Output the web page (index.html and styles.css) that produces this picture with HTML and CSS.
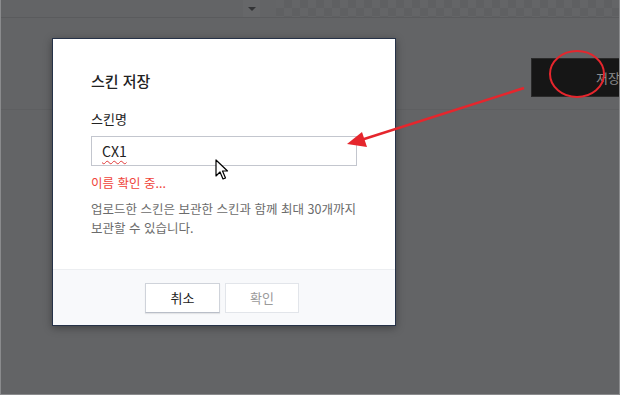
FILE: index.html
```html
<!DOCTYPE html>
<html lang="ko">
<head>
    <meta charset="UTF-8">
    <title>스킨 저장</title>
    <link rel="stylesheet" href="styles.css">
</head>
<body>
<div class="screen">

    <!-- Dimmed page behind the dialog -->
    <div class="toolbar">
        <div class="select-box"><span class="select-arrow"></span></div>
        <div class="checker"></div>
    </div>
    <div class="page-row">
        <button class="save-btn">저장</button>
    </div>

    <!-- Save skin dialog -->
    <div class="dialog">
        <div class="dialog-body">
            <h2 class="dialog-title">스킨 저장</h2>
            <label class="field-label">스킨명</label>
            <div class="text-input"><span class="misspelled">CX1</span></div>
            <p class="check-msg">이름 확인 중...</p>
            <p class="desc">업로드한 스킨은 보관한 스킨과 함께 최대 30개까지<br>보관할 수 있습니다.</p>
        </div>
        <div class="dialog-footer">
            <button class="btn">취소</button>
            <button class="btn disabled">확인</button>
        </div>
    </div>

    <!-- Annotation drawn over the screenshot -->
    <svg class="marks" width="620" height="395" viewBox="0 0 620 395">
        <ellipse cx="576" cy="74" rx="27" ry="23" fill="none" stroke="#e5262d" stroke-width="2"/>
        <line x1="523" y1="88" x2="360" y2="140" stroke="#e5262d" stroke-width="2.5"/>
        <polygon points="346,144 361,132 366,147" fill="#e5262d"/>
    </svg>

    <svg class="pointer" width="14" height="22" viewBox="0 0 14 22">
        <path d="M1 1 L1 17 L5 13 L8 20 L10.5 19 L7.5 12 L12.5 12 Z" fill="#fff" stroke="#000" stroke-width="1.2" stroke-linejoin="round"/>
    </svg>

</div>
</body>
</html>
```

FILE: styles.css
```css
body {
    margin: 0;
    font-family: "Noto Sans CJK KR", "Noto Sans", sans-serif;
}

.screen {
    position: relative;
    width: 620px;
    height: 395px;
    box-sizing: border-box;
    background-color: #636466;
    border: 1px solid #8a8b8d;
    border-top: none;
    overflow: hidden;
}

/* Background page */
.toolbar {
    display: flex;
    height: 17px;
    border-bottom: 1px solid #5a5b5d;
}

.select-box {
    width: 259px;
    display: flex;
    justify-content: flex-end;
}

.select-arrow {
    width: 17px;
    background-color: #666769;
    position: relative;
}

.select-arrow::after {
    content: "";
    position: absolute;
    left: 5px;
    top: 7px;
    border-left: 4px solid transparent;
    border-right: 4px solid transparent;
    border-top: 4px solid #333436;
}

.checker {
    margin-left: 16px;
    flex: 1;
    background-color: #646567;
    background-image: conic-gradient(#5f6062 25%, transparent 0 50%, #5f6062 0 75%, transparent 0);
    background-size: 16px 16px;
}

.page-row {
    height: 92px;
    border-bottom: 1px solid #5e5f61;
    display: flex;
    justify-content: flex-end;
    align-items: flex-start;
    padding-top: 40px;
    box-sizing: border-box;
}

.save-btn {
    width: 89px;
    height: 39px;
    margin-right: -1px;
    background-color: #161616;
    border: 1px solid #2a2a2a;
    color: #8c8c8c;
    font-family: inherit;
    font-size: 13px;
    text-align: left;
    padding-left: 64px;
    white-space: nowrap;
    overflow: hidden;
}

/* Dialog */
.dialog {
    position: absolute;
    left: 51px;
    top: 38px;
    width: 344px;
    height: 288px;
    box-sizing: border-box;
    background-color: #fff;
    border: 1px solid #263248;
    box-shadow: 0 2px 8px rgba(0, 0, 0, 0.35);
    display: flex;
    flex-direction: column;
}

.dialog-body {
    flex: 1;
    padding: 31px 38px 0 38px;
}

.dialog-title {
    margin: 0;
    font-size: 15px;
    line-height: 22px;
    font-weight: 500;
    color: #222;
}

.field-label {
    display: block;
    margin-top: 17px;
    font-size: 13px;
    line-height: 20px;
    color: #222;
}

.text-input {
    margin-top: 7px;
    width: 266px;
    height: 30px;
    box-sizing: border-box;
    border: 1px solid #c3c6ce;
    padding-left: 10px;
    font-size: 14px;
    line-height: 28px;
    color: #222;
}

.misspelled {
    text-decoration: underline wavy #e03a3a;
    text-decoration-thickness: 1px;
    text-underline-offset: 3px;
}

.check-msg {
    margin: 8px 0 0;
    font-size: 12.5px;
    line-height: 18px;
    color: #f0443a;
}

.desc {
    margin: 7px 0 0;
    font-size: 12.5px;
    line-height: 19px;
    color: #6b6b6b;
}

.dialog-footer {
    height: 56px;
    background-color: #f8f9fb;
    border-top: 1px solid #eceef1;
    box-sizing: border-box;
    display: flex;
    justify-content: center;
    align-items: center;
    gap: 5px;
    padding-right: 4px;
}

.btn {
    width: 75px;
    height: 30px;
    background-color: #fff;
    border: 1px solid #cfd3da;
    border-bottom-color: #b9bec8;
    box-shadow: 0 1px 1px rgba(0, 0, 0, 0.08);
    font-family: inherit;
    font-size: 13px;
    color: #222;
}

.btn.disabled {
    width: 74px;
    color: #9a9a9a;
    border-color: #e2e5ea;
    box-shadow: none;
}

/* Annotation overlay */
.marks {
    position: absolute;
    left: 0;
    top: 0;
    pointer-events: none;
}

.pointer {
    position: absolute;
    left: 214px;
    top: 159px;
}
```
